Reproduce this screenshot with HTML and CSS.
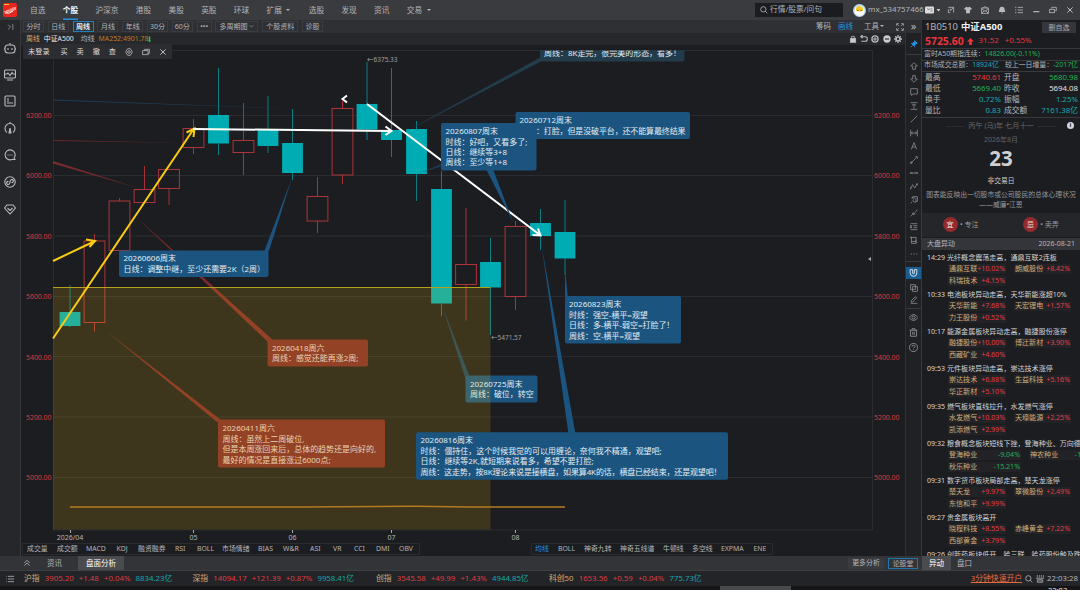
FILE: index.html
```html
<!DOCTYPE html>
<html lang="zh-CN">
<head>
    <meta charset="UTF-8">
    <title>中证A500 周线</title>
    <link rel="stylesheet" href="styles.css">
</head>
<body>
    <header class="topbar">
        <svg class="logo" viewBox="0 0 14 14"><rect width="14" height="14" rx="2" fill="#e8281e"/><path d="M2 9.5V8M4 10V7M6 9V6.500M8 9V5.500M10 8V4.500M12 7V4M2 10q5 1 8-2" stroke="#fff" fill="none"/><path d="M1 1.500h5" stroke="#f8c22c"/></svg>
        <nav class="menu">
            <a>自选</a><a class="active">个股</a><a>沪深京</a><a>港股</a><a>美股</a><a>英股</a><a>环球</a><a class="drop">扩展</a><a>选股</a><a>发现</a><a>资讯</a><a class="drop">交易</a>
        </nav>
        <div class="search">
            <svg class="ico" viewBox="0 0 12 12"><circle cx="5" cy="5" r="4"/><path d="M8 8l3 3"/></svg>
            <span>行情/股票/问句</span>
        </div>
        <div class="user">
            <svg class="avatar" viewBox="0 0 12 12"><circle cx="6" cy="6" r="6" fill="#b9dcf0"/><circle cx="6" cy="6.500" r="4.600" fill="#fff"/><path d="M2.500 5.500q.5-4 3.500-3.500 3.500 0 3.500 4-3.500 2-7 0z" fill="#f6c628"/><path d="M4.500 5.500v1M7.500 5.500v1" stroke="#704b19"/></svg>
            <span>mx_534757466</span>
        </div>
        <div class="win">
            <svg class="card" viewBox="0 0 15 10"><rect y="1.500" width="9" height="7" rx="1" fill="#ddd"/><path d="M2.500 3.500l1 1.500 1-1.500M5.500 4h2M5.500 6h2" stroke="#555" stroke-width=".7" fill="none"/><path d="M11.500 4h4l-2 2.500z" fill="#ccc"/></svg>
            <svg class="ico" viewBox="0 0 12 12"><path d="M2 2h8v8M2 5v5h3M5 7l5-5M5 7V4"/></svg>
            <svg class="ico solid" viewBox="0 0 12 12"><path d="M3.500 1q2.500 2 5 0L12 4l-2 2-1-1v6H3V5L2 6 0 4z"/></svg>
            <svg class="ico" viewBox="0 0 12 12"><rect x="1" y="3" width="10" height="8"/><path d="M1 4l5 4 5-4M1 11l4-4M11 11L7 7M3 3l3-2 3 2"/></svg>
            <svg class="ico solid" viewBox="0 0 12 12"><path d="M6 1q4 0 4 5l1 3H1l1-3q0-5 4-5zM4.500 10h3L6 11.500z"/></svg>
            <svg class="ico" viewBox="0 0 12 12"><path d="M4 2h8M4 6h8M4 10h8M0 2h2M0 6h2M0 10h2"/></svg>
            <svg class="ico" viewBox="0 0 12 12"><path d="M2 8.500h9" stroke-width="1.800"/></svg>
            <svg class="ico" viewBox="0 0 12 12"><rect x="1" y="5" width="7" height="5"/><path d="M4 4V2h7v5H9"/></svg>
            <svg class="ico" viewBox="0 0 12 12"><path d="M2 2l8 8M10 2l-8 8" stroke-width="1.500"/></svg>
        </div>
    </header>

    <main class="main">
        <aside class="side">
            <svg class="ico small" viewBox="0 0 12 12"><path d="M2 2l4 4-4 4M10 1v10"/></svg>
            <svg class="ico" viewBox="0 0 12 12"><rect x="1" y="3" width="10" height="8" rx="3"/><path d="M6 3V1M4 6v2M8 6v2M0 6v2M12 6v2"/></svg>
            <svg class="ico" viewBox="0 0 12 12"><rect x=".5" y="1" width="11" height="8" rx="1"/><path d="M1 5h2l1-1 2 2.500 2-3 1 1.500h2M3 11h6"/></svg>
            <svg class="ico" viewBox="0 0 12 12"><rect x="1" y="1" width="10" height="10" rx="1"/><path d="M3 4h2M3 8h6M3 6h2"/></svg>
            <svg class="ico" viewBox="0 0 12 12"><path d="M3 10.500A5 5 0 1 1 9 10.500M6 0v2"/><path d="M6 6l1 5H5z" fill="#a9aaad"/></svg>
            <svg class="ico" viewBox="0 0 12 12"><path d="M10 9a5 5 0 1 0-2 1.500h3zM3.500 6h1M5.500 6h1M7.500 6h1"/></svg>
            <svg class="ico" viewBox="0 0 12 12"><circle cx="6" cy="6" r="5.200"/><path d="M5.500 7.500a1.500 1.500 0 1 1-1-2M6.500 4.500a1.500 1.500 0 1 1 1 2M5.500 7.500l1-3"/></svg>
            <svg class="ico" viewBox="0 0 12 12"><path d="M3 2h6l2.500 3L6 11 .5 5zM3.500 5L6 7.500 8.500 5"/></svg>
        </aside>

        <section class="center">
            <div class="periods">
                <a>分时</a><a>日线</a><a class="active">周线</a><a>月线</a><a>年线</a><a>30分</a><a>60分</a><a class="dots">•••</a><a class="wide">多周期图 <svg class="chev" viewBox="0 0 8 8"><path d="M1 2l3 3 3-3"/></svg></a><a class="mid">个股资料</a><a>诊股</a>
                <span class="tools"><b>筹码</b><b class="blue">画线</b><b class="drop">工具</b><svg class="ico" viewBox="0 0 12 12"><path d="M1 4V1h3M8 1h3v3M11 8v3H8M4 11H1V8M2 2l2 2M10 2L8 4M10 10L8 8M2 10l2-2"/></svg></span>
            </div>
            <div class="info">
                <span class="gold">周线</span><span class="white">中证A500</span><span class="ma">均线</span><span class="orange">MA252:4901.78</span><svg class="down" viewBox="0 0 4 8"><path d="M1 0h2v5h1L2 8 0 5h1z"/></svg>
                <span class="ops">
                    <svg class="ico" viewBox="0 0 12 12"><rect x="2" y="5" width="8" height="6" fill="#ccc"/><path d="M4 5V2h4v3"/></svg>
                    <svg class="ico" viewBox="0 0 12 12"><path d="M1 2.500h7q3 0 3 3.500T8 9.500H2M4 0L1 2.500 4 5" stroke-width="1.600"/></svg>
                    <svg class="ico" viewBox="0 0 12 12"><circle cx="6" cy="6" r="4.600" stroke-width="2"/><path d="M6 3v6M3 6h6" stroke-width="1.500"/></svg>
                    <svg class="ico" viewBox="0 0 12 12"><circle cx="6" cy="6" r="5.500" fill="#ccc" stroke="none"/><path d="M3 6h6" stroke="#222" stroke-width="1.600"/></svg>
                    <svg class="ico" viewBox="0 0 12 12"><circle cx="6" cy="6" r="3" stroke-width="2.500"/><path d="M6 0v2M6 10v2M0 6h2M10 6h2M2 2l1 1M9 9l1 1M10 2L9 3M2 10l1-1" stroke-width="2"/></svg>
                </span>
            </div>
            <div class="chart">
                <svg class="plot" viewBox="21 45 884 498">
                    <g class="grid">
                        <path d="M53 50.500H872.500V530H53.500V50.500"/>
                        <path d="M53 115.500H872M53 175.500H872M53 236H872M53 296.500H872M53 356.500H872M53 417H872M53 477.500H872"/>
                    </g>
                    <g class="price left">
                        <text x="51.500" y="117.700">6200.00</text><text x="51.500" y="178.200">6000.00</text><text x="51.500" y="238.700">5800.00</text><text x="51.500" y="299.200">5600.00</text><text x="51.500" y="359.500">5400.00</text><text x="51.500" y="420">5200.00</text><text x="51.500" y="480.300">5000.00</text>
                    </g>
                    <g class="price">
                        <text x="874" y="117.700">6200.00</text><text x="874" y="178.200">6000.00</text><text x="874" y="238.700">5800.00</text><text x="874" y="299.200">5600.00</text><text x="874" y="359.500">5400.00</text><text x="874" y="420">5200.00</text><text x="874" y="480.300">5000.00</text>
                    </g>
                    <path d="M871 257v4l-3-2z" fill="#aaa"/>
                    <path d="M53 99.500L300 109 53 100.600z" fill="#1d4058"/>
                    <path d="M53 140L190 143 53 141z" fill="#6a282b"/>
                    <path d="M53 161L138 188 53 163.500z" fill="#7a2b2e"/>

                    <g id="candles"></g>

                    <!-- 区间内的标注，位于黄色区域下方 -->
                    <g class="note red">
                        <path d="M136 217L273 340 269 343z"/><rect x="267.500" y="339.500" width="100.500" height="27" rx="2"/>
                        <text x="272" y="350.500">20260418周六</text><text x="272" y="361">周线：感觉还能再涨2周;</text>
                        <path d="M106 331L221 420 217 422z"/><rect x="218" y="419.500" width="167" height="48" rx="2"/>
                        <text x="222.500" y="430.500">20260411周六</text><text x="222.500" y="441.500">周线：虽然上二周破位,</text><text x="222.500" y="452">但是本周涨回来后，总体的趋势还是向好的,</text><text x="222.500" y="462.500">最好的情况是直接涨过6000点;</text>
                    </g>
                    <g class="note">
                        <path d="M443 308L469 375 465.500 379z" opacity=".7"/><rect x="465.500" y="375.500" width="72" height="27" rx="2"/>
                        <text x="470" y="386.500">20260725周末</text><text x="470" y="397">周线：破位，转空</text>
                    </g>
                    <rect x="53" y="287.500" width="437.500" height="242" fill="#fdc80a" fill-opacity=".15"/>
                    <path d="M53 287.500H490.500" stroke="#b5a21a"/>
                    <path d="M70 507L300 507 415 506.300 470 507 565 507" class="ma252"/>

                    <g class="arrow yellow">
                        <path d="M53 261L94 241.500M86 239.500L95 241 89.500 247"/>
                        <path d="M53 338.500L193 130M186.500 132.500L194.500 128.500 193.500 137"/>
                    </g>
                    <g class="arrow">
                        <path d="M193 129L391 131M385.500 126.500L391.500 131 385.500 135"/>
                        <path d="M367 104L540 235M538 228.500L540.500 235.500 532.500 235"/>
                        <path d="M347 95.500L342.500 99 347 102.500"/>
                    </g>

                    <g class="note">
                        <g class="dim"><path d="M541 57L403 133 542 61z"/><path d="M540 50.500H684.500V59.500a2 2 0 0 1-2 2H542a2 2 0 0 1-2-2z"/></g>
                        <text x="544" y="55.800" clip-path="url(#plotClip)">周线：8K走完，很完美的形态，看多！</text>
                        <path d="M292 178L269 251 264 252z"/><rect x="119" y="250.500" width="149.500" height="26.500" rx="2"/>
                        <text x="123.500" y="261">20260606周末</text><text x="123.500" y="272">日线：调整中继，至少还需要2K（2周）</text>
                        <path d="M420 173L443 163 443 166z" opacity=".5"/><rect x="515.500" y="112" width="174.500" height="27" rx="2"/>
                        <text x="519.500" y="123">20260712周末</text>
                        <path d="M513 222L486 169H493z"/><rect x="441" y="123" width="95.500" height="47.500" rx="2"/>
                        <text x="536" y="133.500" textLength="149.500">：打脸，但是没破平台，还不能算最终结果</text>
                        <text x="445.500" y="134">20260807周末</text><text x="445.500" y="144.500">时线：好吧，又看多了;</text><text x="445.500" y="155">日线：继续等3+8</text><text x="445.500" y="165.200">周线：至少等1+8</text>
                        <path d="M565 268L568 298H565z"/><rect x="565" y="296" width="116" height="47.500" rx="2"/>
                        <text x="569" y="307">20260823周末</text><text x="569" y="317.500">时线：强空-横平=观望</text><text x="569" y="328.300">日线：多-横平-弱空=打脸了！</text><text x="569" y="338.500">周线：空-横平=观望</text>
                        <path d="M541.500 245L575.500 434H568.500z"/><rect x="416" y="432.300" width="312" height="47.500" rx="2"/>
                        <text x="420.500" y="443.300">20260816周末</text><text x="420.500" y="453.800">时线：僵持住，这个时候我觉的可以用缠论，奈何我不精通，观望吧;</text><text x="420.500" y="464">日线：继续等2K,就短期来说看多，希望不要打脸;</text><text x="420.500" y="474.500" textLength="301">周线：这走势，按8K理论来说是接横盘，如果算4K的话，横盘已经结束，还是观望吧！</text>
                    </g>
                    <clipPath id="plotClip"><rect x="53" y="50.500" width="820" height="480"/></clipPath>

                    <g class="mark"><text x="367" y="61.700">←6375.33</text><text x="491" y="339.500">←5471.57</text></g>
                    <path class="tick" d="M70.500 530v3M193.500 530v3M292.500 530v3M391.500 530v3M515.500 530v3"/>
                    <g class="date"><text x="70" y="539.800">2026/04</text><text x="193.500" y="539.800">05</text><text x="292.500" y="539.800">06</text><text x="391.500" y="539.800">07</text><text x="515.500" y="539.800">08</text></g>
                </svg>
                <div class="trade">
                    <span class="login">未登录</span><span>买</span><span>卖</span><span>撤</span><span>查</span>
                    <svg class="ico" viewBox="0 0 12 12"><path d="M4 1h4l3 5-3 5H4L1 6z"/><circle cx="6" cy="6" r="2"/></svg>
                    <svg class="ico" viewBox="0 0 12 12"><rect x="1" y="4" width="8" height="6"/><path d="M4 4V2h7v6H9"/></svg>
                    <svg class="ico" viewBox="0 0 12 12"><path d="M2 2l8 8M10 2l-8 8" stroke-width="1.500"/></svg>
                </div>
            </div>
            <div class="indicators">
                <div class="sub"><a>成交量</a><a>成交额</a><a>MACD</a><a>KDJ</a><a>融资融券</a><a>RSI</a><a>BOLL</a><a>市场情绪</a><a>BIAS</a><a>W&amp;R</a><a>ASI</a><a>VR</a><a>CCI</a><a>DMI</a><a>OBV</a></div>
                <div class="over"><a class="blue">均线</a><a>BOLL</a><a>神奇九转</a><a>神奇五线谱</a><a>牛顿线</a><a>多空线</a><a>EXPMA</a><a>ENE</a></div>
            </div>
        </section>

        <aside class="draw">
            <span class="more">»</span>
            <div class="pin"><svg class="ico" viewBox="0 0 12 12"><path d="M7 1l4 4-2 .5L7 8v2L2 5h2l2.500-2zM4 8l-3 3"/></svg></div>
            <div class="group">
                <svg class="ico" viewBox="0 0 12 12"><path d="M6 1l5 5H8v5H4V6H1z"/></svg>
                <svg class="ico" viewBox="0 0 12 12"><path d="M6 11L1 6h3V1h4v5h3z"/></svg>
                <svg class="ico" viewBox="0 0 12 12"><path d="M1 1h10v8H5l-3 2V9H1z"/></svg>
                <svg class="ico" viewBox="0 0 12 12"><path d="M1 1h10M1 11h10M6 10V4M3 5l3-2 3 2"/></svg>
                <svg class="ico" viewBox="0 0 12 12"><path d="M1 11L11 1"/></svg>
                <svg class="ico" viewBox="0 0 12 12"><path d="M1 1v10M11 1v10M2 6h8M4 4L2 6l2 2M8 4l2 2-2 2"/></svg>
                <svg class="ico" viewBox="0 0 12 12"><path d="M2 11L6 1l4 10M3.500 7.500h5"/></svg>
                <svg class="ico" viewBox="0 0 12 12"><path d="M2 10l8-8M8 1h3v3M1 9h2v2H1z"/></svg>
                <svg class="ico" viewBox="0 0 12 12"><path d="M1 6h10M1 4.500v3M11 4.500v3M3 5v2M9 5v2"/></svg>
                <svg class="ico" viewBox="0 0 12 12"><path d="M1 10l3-6 3 5 4-7M1 8v3M9 3h2v2"/></svg>
                <svg class="ico" viewBox="0 0 12 12"><path d="M1 11l2-2M4 3V1h7v7H9M2 3h5l2 2v4H6L4 7l2-2"/></svg>
                <svg class="ico" viewBox="0 0 12 12"><path d="M1 11l3-3M8 5l3-4M4 6h3v2H4z"/></svg>
                <svg class="ico" viewBox="0 0 12 12"><path d="M1 1h10M5 4h6M5 7h6M1 10h10M1 3v5l2-2z"/></svg>
                <svg class="ico" viewBox="0 0 12 12"><rect x="2" y="2" width="7" height="6"/><path d="M0 2h3M2 8v3h7M9 6v5l2-2"/></svg>
                <svg class="ico" viewBox="0 0 12 12"><path d="M1 6h2M5 6h2M9 6h2"/></svg>
            </div>
            <div class="group snap">
                <svg class="ico on" viewBox="0 0 18 12"><path d="M5 2v4q0 4 4 4t4-4V2h-3v4q0 1-1 1t-1-1V2z"/></svg>
                <svg class="ico" viewBox="0 0 12 12"><rect x="1" y="1" width="7" height="7"/><rect x="4" y="4" width="7" height="7"/></svg>
                <svg class="ico" viewBox="0 0 12 12"><path d="M2 9V7l6-6 2 2-6 6zM1 11h10"/></svg>
            </div>
            <div class="group last">
                <svg class="ico" viewBox="0 0 12 12"><path d="M0 6q6-8 12 0-6 8-12 0z"/><circle cx="6" cy="6" r="2"/></svg>
                <svg class="ico" viewBox="0 0 12 12"><path d="M1 3h10M4 3V1h4v2M2 3v8h8V3M5 5v4M7 5v4"/></svg>
                <svg class="ico" viewBox="0 0 12 12"><circle cx="6" cy="6" r="5.500"/><path d="M4 5q0-2 2-2t2 1.500T6 7M6 8.500v1"/></svg>
            </div>
        </aside>

        <aside class="quote">
            <div class="title"><span>1B0510</span><b>中证A500</b><button>删自选</button></div>
            <div class="last-price"><b>5725.60</b><svg viewBox="0 0 8 8"><path d="M4 0l4 4H5.500v4h-3V4H0z"/></svg><span>31.52</span><span>+0.55%</span></div>
            <div class="line">富时A50期指连续：<span class="green">14826.00(-0.11%)</span></div>
            <div class="line"><div>市场成交总额：<span class="cyan">18924亿</span></div><div class="diff">较上一日增量：<span class="green">-2017亿</span></div></div>
            <div class="stats">
                <span>最高</span><span class="red">5740.61</span><span>开盘</span><span class="green">5680.98</span>
                <span>最低</span><span class="green">5669.40</span><span>昨收</span><span class="flat">5694.08</span>
                <span>换手</span><span class="cyan">0.72%</span><span>振幅</span><span class="cyan">1.25%</span>
                <span>量比</span><span class="cyan">0.83</span><span>成交额</span><span class="cyan">7161.38亿</span>
            </div>
            <div class="calendar">
                <div class="lunar"><i></i>丙午 (马)年 七月十一<i></i><em>i</em></div>
                <div class="month">2026年8月</div>
                <div class="day">23</div>
                <div class="closed">非交易日</div>
                <div class="saying">图表能反映出一切股市或公司股民的总体心理状况<br>——威廉•江恩</div>
                <div class="luck"><span><b>宜</b>• 专注</span><span><b>忌</b>• 卖弄</span></div>
            </div>
            <div class="news-head"><span>大盘异动</span><span>2026-08-21</span></div>
            <div class="news" id="news"></div>
        </aside>
    </main>

    <footer class="tabs">
        <svg class="ico fold" viewBox="0 0 12 12"><path d="M2 6l4-4 4 4M2 10l4-4 4 4"/></svg>
        <a class="zx">资讯</a><a class="active">盘面分析</a>
        <a class="more-btn">更多分析</a><a class="forum">论股堂</a>
        <a class="active yd">异动</a><a class="pk">盘口</a>
    </footer>
    <footer class="status">
        <svg class="ico" viewBox="0 0 12 12"><path d="M3 2h9M3 6h9M3 10h9M0 2h1M0 6h1M0 10h1"/></svg>
        <div class="idx"><b>沪指</b><span>3905.20</span><span>+1.48</span><span>+0.04%</span><i>8834.23亿</i></div>
        <div class="idx sz"><b>深指</b><span>14094.17</span><span>+121.39</span><span>+0.87%</span><i>9958.41亿</i></div>
        <div class="idx cy"><b>创指</b><span>3545.58</span><span>+49.99</span><span>+1.43%</span><i>4944.85亿</i></div>
        <div class="idx"><b>科创50</b><span>1653.56</span><span>+0.59</span><span>+0.04%</span><i>775.73亿</i></div>
        <div class="right">
            <a>3分钟快速开户</a>
            <svg class="ico" viewBox="0 0 12 12"><circle cx="5" cy="5" r="4"/><path d="M8 8l3 3"/></svg>
            <svg class="ico" viewBox="0 0 12 12"><path d="M2 0v4M5 0v4M8 0v4M11 0v4M0 5h12M2 7h8v4H2zM2 9h8" stroke-width="1"/></svg>
            <span>22:03:28</span>
        </div>
    </footer>
    <div class="taskbar"><i></i><span>22:03</span></div>

    <script src="script.js"></script>
</body>
</html>
```
FILE: styles.css
```css
* {
    box-sizing: border-box;
}

body {
    margin: 0;
    width: 1080px;
    height: 590px;
    overflow: hidden;
    display: flex;
    flex-direction: column;
    background: #1c1d21;
    color: #b4b5b8;
    font: 7.5px/1 "Noto Sans", "Noto Sans CJK SC", sans-serif;
    white-space: nowrap;
}

b, i, em {
    font-weight: normal;
    font-style: normal;
}

.ico {
    width: 8px;
    height: 8px;
    flex: none;
    fill: none;
    stroke: #b9babd;
    stroke-width: 1.2;
}

.solid {
    fill: #b9babd;
    stroke: none;
}

.red { color: #e23b41; }
.green { color: #1fb254; }
.cyan { color: #14aab4; }
.blue { color: #2393e0; }

/* 顶部菜单 */
.topbar {
    height: 20px;
    flex: none;
    display: flex;
    align-items: center;
    background: #3a3b3f;
}

.logo {
    width: 14px;
    height: 14px;
    margin-left: 3px;
}

.menu {
    display: flex;
    height: 20px;
    width: 738px;
    padding-left: 13px;
    gap: 17.3px;
    font-size: 7.7px;
    line-height: 20px;
}

.menu .active {
    color: #fff;
    font-weight: bold;
    box-shadow: inset 0 -1.5px #2393e0;
}

.drop::after {
    content: "";
    display: inline-block;
    border: 2.2px solid transparent;
    border-top-color: currentColor;
    border-bottom: 0;
    margin-left: 4.5px;
    vertical-align: 2px;
}

.menu .drop {
    margin-right: 1px;
}

.search {
    display: flex;
    align-items: center;
    gap: 2px;
    width: 88px;
    height: 14px;
    padding-left: 5px;
    background: #1b1c20;
    font-size: 7.7px;
}

.user {
    display: flex;
    align-items: center;
    gap: 2px;
    margin-left: 10px;
    font-size: 7.9px;
    width: 72px;
}

.avatar {
    width: 13px;
    height: 13px;
    flex: none;
}

.win {
    display: flex;
    align-items: center;
    gap: 9px;
}

.card {
    width: 15px;
    height: 10px;
    margin-right: -2px;
}

.main {
    display: grid;
    grid-template-columns: 21px 884px 17px 158px;
    height: 536px;
    flex: none;
}

.side {
    display: flex;
    flex-direction: column;
    align-items: center;
    gap: 14.8px;
    padding-top: 3px;
    background: #26272b;
    border-right: 1px solid #38393d;
}

.side .ico {
    width: 12px;
    height: 12px;
    stroke-width: 1.1;
}

.side .small {
    width: 7px;
    height: 8px;
    margin-bottom: -4px;
}

.center {
    display: flex;
    flex-direction: column;
    min-width: 0;
}

.periods {
    display: flex;
    align-items: center;
    gap: 3.8px;
    height: 13px;
    padding-left: 2px;
    background: #2f3034;
    font-size: 7px;
}

.periods a {
    width: 21px;
    height: 11px;
    border: 1px solid #3b3c40;
    text-align: center;
    line-height: 9px;
}

.periods a.active {
    border-color: #2180be;
    color: #dff1ff;
    font-weight: bold;
}

.periods .dots { width: 15px; }
.periods .wide { width: 43px; }
.periods .mid { width: 36px; }

.chev {
    width: 5px;
    height: 5px;
    fill: none;
    stroke: #aaa;
}

.tools {
    display: flex;
    align-items: center;
    margin-left: auto;
    padding-right: 1px;
    gap: 7px;
    font-size: 7.5px;
}

.tools .drop { margin-left: 4px; }
.tools .drop::after { margin-left: 1px; }
.tools .ico { margin: 0 0 0 5px; }

.info {
    display: flex;
    align-items: center;
    height: 12px;
    padding-left: 5px;
    background: #27282c;
    font-size: 6.9px;
}

.info .gold { color: #d9aa68; }
.info .white { color: #e8e8e8; margin-left: 4px; }
.info .ma { margin-left: 7px; }
.info .orange { color: #bd7e20; margin-left: 4px; }

.info .down {
    width: 3px;
    height: 7px;
    fill: #23c452;
}

.ops {
    display: flex;
    gap: 3.3px;
    margin-left: auto;
    padding-right: 3px;
}

.chart {
    position: relative;
    height: 498px;
}

.plot {
    display: block;
    width: 884px;
    height: 498px;
}

/* 浮在K线图上的交易工具条 */
.trade {
    position: absolute;
    left: 2px;
    top: -1px;
    width: 149px;
    height: 15px;
    display: flex;
    align-items: center;
    gap: 8.9px;
    padding-left: 5px;
    background: #2c2d31;
    color: #dcdcdc;
    font-size: 7.2px;
}

.trade .login { margin-right: 2px; }

.grid { fill: none; stroke: #2b2c30; }
.price { fill: #d9393f; font-size: 6.9px; }
.left { text-anchor: end; }
.ma252 { fill: none; stroke: #b47b20; stroke-width: 1.6; }
.arrow { fill: none; stroke: #fff; stroke-width: 2; }
.yellow { stroke: #f8cb12; }
.note { fill: #1a547f; font-size: 7.98px; }
.note text { fill: #e4edf3; }
.note.red { fill: #802b2c; }
.note.red text { fill: #e5d6cd; }
.note .dim { fill: #233c4c; }
.up { fill: none; stroke: #ad3438; }
.fall { fill: #00acb4; stroke: none; }
.wick { stroke-width: 1; }
.wick-up { stroke: #a63236; }
.wick-fall { stroke: #087e83; }
.mark { fill: #a0a1a4; font-size: 6.5px; }
.tick { stroke: #aaa; }
.date { fill: #b4b5b8; font-size: 7px; text-anchor: middle; }

.indicators {
    display: flex;
    gap: 111px;
    height: 13px;
    padding-left: 1px;
    font-size: 6.9px;
    line-height: 12px;
}

.sub, .over {
    display: grid;
    height: 12px;
    border: 1px solid #2a2b2f;
    line-height: 10px;
}

.sub {
    width: 398px;
    padding-left: 4px;
    grid-template-columns: 30px 29px 30.5px 21.5px 37px 22px 25px 36px 25px 27px 23px 21px 22px 23px 16px;
}

.over {
    width: 242px;
    padding-left: 3px;
    grid-template-columns: 23px 26px 36px 43px 29px 29px 32.5px 16px;
}

/* 画线工具 */
.draw {
    display: flex;
    flex-direction: column;
    align-items: center;
    border-left: 1px solid #303135;
    border-right: 1px solid #38393d;
    background: #202125;
}

.draw .ico {
    stroke: #8d8e91;
}

.more {
    height: 13px;
    width: 16px;
    background: #2f3034;
    font-size: 11px;
    line-height: 11px;
    text-align: center;
}

.pin {
    display: flex;
    align-items: center;
    height: 21px;
}

.draw .pin .ico {
    fill: #2393e0;
    stroke: #2393e0;
}

.group {
    display: flex;
    flex-direction: column;
    align-items: center;
    gap: 5.45px;
    width: 15px;
    padding-top: 6.5px;
    border-top: 1px solid #38393d;
}

.snap {
    margin-top: 3.5px;
    gap: 4.5px;
    padding-top: 5px;
}

.draw .on {
    width: 15px;
    height: 12px;
    background: #1b5d91;
    stroke: #cfe4f4;
}

.last {
    margin-top: 4px;
    padding-top: 4px;
    gap: 6px;
}

.last .ico {
    width: 9px;
    height: 9px;
}

/* 行情面板 */
.quote {
    display: flex;
    flex-direction: column;
    height: 536px;
    overflow: hidden;
}

.title {
    display: flex;
    align-items: center;
    height: 14px;
    padding: 0 4px 0 3px;
    font-size: 9.4px;
    gap: 3px;
}

.title b {
    color: #f1f1f1;
    font-weight: bold;
    font-size: 9.4px;
}

.title button {
    margin-left: auto;
    width: 34px;
    height: 11px;
    padding: 0;
    border: 0;
    background: #35363a;
    color: #aaabae;
    font: inherit;
    font-size: 7px;
}

.last-price {
    display: flex;
    align-items: center;
    height: 15px;
    padding-left: 3px;
    color: #e8363d;
    font-size: 7.9px;
    border-bottom: 1px solid #38393d;
}

.last-price b {
    font-size: 10.4px;
    font-weight: bold;
}

.last-price svg {
    width: 7px;
    height: 7px;
    margin: 0 5px 0 3px;
    fill: #f0343b;
}

.last-price span + span {
    margin-left: 6px;
}

.line {
    display: flex;
    align-items: center;
    height: 11.5px;
    padding: 0 2px;
    font-size: 6.9px;
    border-bottom: 1px solid #38393d;
}

.diff {
    margin-left: auto;
}

.stats {
    display: grid;
    grid-template-columns: 20px 56px 30px 47px;
    grid-template-rows: repeat(4, 11.2px);
    align-items: center;
    width: 158px;
    height: 46px;
    padding: 0 2px 0 3px;
    font-size: 7.8px;
    border-bottom: 1px solid #38393d;
}

.stats span:nth-child(even) { text-align: right; }
.stats span:nth-child(4n+3) { padding-left: 3px; }
.stats .flat { color: #e0e0e0; }

.calendar {
    height: 119.5px;
    text-align: center;
    color: #97989b;
}

.lunar {
    position: relative;
    display: flex;
    justify-content: center;
    align-items: center;
    gap: 4px;
    height: 16px;
    color: #66676b;
    font-size: 7.2px;
}

.lunar i {
    width: 18px;
    border-top: 1px solid #2c2d31;
}

.lunar em {
    position: absolute;
    right: 6px;
    top: 4px;
    width: 7px;
    height: 7px;
    border-radius: 50%;
    background: #d6d6d6;
    color: #1c1d21;
    font-size: 6px;
    font-weight: bold;
}

.month {
    height: 12px;
    line-height: 12px;
    color: #626367;
    font-size: 7px;
}

.day {
    height: 28px;
    line-height: 24px;
    font-size: 20.5px;
    font-weight: bold;
    color: #cfcfd1;
}

.closed {
    height: 13px;
    line-height: 13px;
    font-size: 6.8px;
    color: #d0d0d0;
}

.saying {
    height: 26px;
    padding-top: 3px;
    font-size: 6.8px;
    line-height: 10px;
}

.luck {
    display: flex;
    height: 23.5px;
    align-items: center;
    padding-left: 20.5px;
    gap: 44px;
    background: #25262a;
    font-size: 7.1px;
}

.luck span {
    display: flex;
    align-items: center;
    gap: 2.5px;
}

.luck b {
    width: 15px;
    height: 15px;
    line-height: 14px;
    border-radius: 50%;
    background: #952a2e;
    color: #f0e4df;
}

.news-head {
    display: flex;
    justify-content: space-between;
    align-items: center;
    height: 12.5px;
    flex: none;
    padding: 0 5px;
    background: #34353a;
    font-size: 7px;
}

.news {
    flex: 1;
    overflow: hidden;
    padding-top: 2px;
    font-size: 7.05px;
}

.event {
    height: 37.15px;
    padding-left: 5px;
}

.event p {
    margin: 0;
    height: 12px;
    line-height: 10px;
    color: #d4d4d6;
}

.event time {
    margin-right: 2px;
}

.stocks {
    display: grid;
    grid-template-columns: 58px 57px;
    column-gap: 8px;
    row-gap: 2px;
    padding-left: 21px;
}

.stocks.far {
    grid-template-columns: 73px 73px;
}

.stocks span {
    display: flex;
    justify-content: space-between;
    height: 10px;
    line-height: 9px;
    padding: 0 1px;
    background: #232327;
    color: #d2ad78;
}

/* 底部 */
.tabs {
    display: flex;
    align-items: center;
    height: 15px;
    flex: none;
    padding-left: 23px;
    background: #333438;
    border-bottom: 1px solid #3e3f43;
}

.tabs a {
    line-height: 14px;
    height: 14px;
    text-align: center;
}

.tabs .active {
    width: 46px;
    background: #4a4b4f;
    color: #fff;
}

.tabs .zx { width: 47px; }

.tabs .more-btn {
    width: 36px;
    height: 11px;
    line-height: 10px;
    margin-left: auto;
    background: #3a3b3f;
    font-size: 6.9px;
}

.tabs .forum {
    width: 30px;
    height: 11px;
    line-height: 9px;
    margin: 0 4px;
    border: 1px solid #2076ad;
    font-size: 6.9px;
}

.tabs .yd { width: 29px; }
.tabs .pk { width: 129px; padding-left: 6px; text-align: left; }

.status {
    display: flex;
    align-items: center;
    height: 15px;
    flex: none;
    padding: 0 2px 0 6px;
    background: #232428;
    font-size: 7.8px;
}

.status > .ico { margin-right: 10px; }

.idx {
    display: flex;
    gap: 5.2px;
    width: 168.5px;
    color: #dc3c42;
}

.idx.sz { width: 183.5px; }
.idx.cy { width: 173px; }
.idx b { color: #d2ad78; }
.idx i { color: #14a5ae; }

.right {
    display: flex;
    align-items: center;
    gap: 3px;
    margin-left: auto;
}

.right a {
    color: #e36a3c;
    text-decoration: underline;
}

.taskbar {
    display: flex;
    height: 4px;
    overflow: hidden;
    background: #151518;
}

.taskbar i {
    width: 71px;
    margin-left: 720px;
    background: #48494b;
}

.taskbar span {
    margin: 1px 0 0 257px;
    color: #eee;
}
```
FILE: script.js
```js
// [中心x, 实体上沿, 实体下沿, 最高, 最低, 是否上涨]
const candles = [
    [70, 312, 326, 285, 327, 0],
    [94.5, 241, 322.5, 234, 331.5, 1],
    [119.5, 201, 250.5, 198, 250.5, 1],
    [144.5, 189.5, 202.5, 166, 202.5, 1],
    [169, 169.5, 188.5, 169.5, 205, 1],
    [193.5, 128.5, 147.5, 119, 154, 1],
    [218.5, 115, 143.5, 68, 155, 0],
    [243.5, 140.5, 152.5, 103, 175, 1],
    [268, 130, 146, 96, 153, 0],
    [292.5, 143, 173, 109, 180, 0],
    [317.5, 196.5, 221, 177, 233, 1],
    [342.5, 108.5, 175, 101, 184, 1],
    [367, 104, 129.5, 62, 140, 0],
    [391.5, 130, 140, 68, 157, 0],
    [416.5, 129, 174, 121, 201, 0],
    [441.5, 189, 303.5, 171, 316, 0],
    [466, 264.5, 284.5, 208, 320.5, 1],
    [490.5, 262, 287.5, 238, 335, 0],
    [515.5, 226.5, 296.5, 221, 310, 1],
    [540.5, 223, 236, 209, 250, 0],
    [565, 232, 258.5, 200, 275, 0]
];

document.getElementById('candles').innerHTML = candles.map(([x, top, bottom, high, low, up]) => `
    <path class="wick ${up ? 'wick-up' : 'wick-fall'}" d="M${x} ${high}V${top}M${x} ${bottom}V${low}"/>
    <rect class="${up ? 'up' : 'fall'}" x="${x - 10.4}" y="${top}" width="20.8" height="${bottom - top}"/>
`).join('');

const news = [
    ['14:29', '光纤概念震荡走高，通鼎互联2连板', ['通鼎互联', '+10.02%', '朗威股份', '+8.42%', '科瑞技术', '+4.15%']],
    ['10:33', '电池板块异动走高，天华新能涨超10%', ['天华新能', '+7.68%', '天宏锂电', '+1.57%', '力王股份', '+0.52%']],
    ['10:17', '能源金属板块异动走高，融捷股份涨停', ['融捷股份', '+10.00%', '博迁新材', '+3.90%', '西藏矿业', '+4.60%']],
    ['09:53', '元件板块异动走高，崇达技术涨停', ['崇达技术', '+6.88%', '生益科技', '+5.16%', '华正新材', '+5.10%']],
    ['09:35', '燃气板块直线拉升，水发燃气涨停', ['水发燃气', '+10.03%', '天壕能源', '+2.25%', '凯添燃气', '+2.99%']],
    ['09:32', '粮食概念板块短线下挫，登海种业、万向德农', ['登海种业', '-9.04%', '神农种业', '-10.32%', '秋乐种业', '-15.21%']],
    ['09:31', '数字货币板块局部走高，楚天龙涨停', ['楚天龙', '+9.97%', '翠微股份', '+2.49%', '东信和平', '+9.99%']],
    ['09:27', '贵金属板块高开', ['晓程科技', '+8.55%', '赤峰黄金', '+7.22%', '西部黄金', '+3.79%']],
    ['09:26', '创新药板块低开，哈三联、哈药股份触及跌停', []]
];

document.getElementById('news').innerHTML = news.map(([time, title, list]) => {
    let stocks = '';
    for (let i = 0; i < list.length; i += 2) {
        const color = list[i + 1][0] === '-' ? 'green' : 'red';
        stocks += `<span>${list[i]}<b class="${color}">${list[i + 1]}</b></span>`;
    }
    const far = list[1] && list[1][0] === '-' ? ' far' : '';
    return `<div class="event"><p><time>${time}</time>${title}</p><div class="stocks${far}">${stocks}</div></div>`;
}).join('');
```
